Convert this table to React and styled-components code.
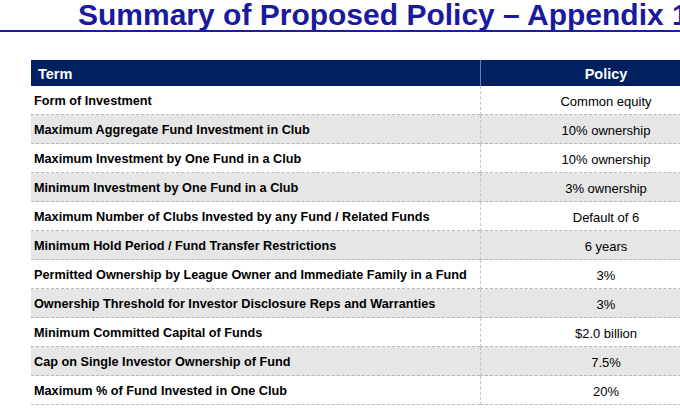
import React from "react";
import styled, { createGlobalStyle } from "styled-components";

const GlobalStyle = createGlobalStyle`
  html, body {
    margin: 0;
    padding: 0;
    background: #fff;
    overflow: hidden;
  }
  body {
    font-family: "Liberation Sans", Arial, sans-serif;
  }
`;

const Page = styled.div`
  width: 680px;
  height: 418px;
  overflow: hidden;
  background: #fff;
`;

const TitleBar = styled.div`
  height: 30px;
  border-bottom: 2px solid #1c1ca8;
  padding-left: 78px;
  white-space: nowrap;
  overflow: hidden;
`;

const Title = styled.h1`
  margin: 0;
  font-size: 30px;
  line-height: 29px;
  font-weight: bold;
  color: #1a1a9e;
`;

const TableWrap = styled.div`
  margin-top: 28px;
  margin-left: 31px;
  width: 700px;
`;

const Grid = styled.div`
  display: grid;
  grid-template-columns: 449px 251px;
`;

const HeadCell = styled.div`
  height: 26px;
  box-sizing: border-box;
  padding-top: 1px;
  background: #002060;
  color: #fff;
  font-weight: bold;
  font-size: 14.5px;
  display: flex;
  align-items: center;
  justify-content: ${(p) => (p.$center ? "center" : "flex-start")};
  padding-left: ${(p) => (p.$center ? "0" : "7px")};
  border-left: ${(p) => (p.$center ? "1px solid #6a7fa8" : "none")};
`;

const Cell = styled.div`
  height: 29px;
  box-sizing: border-box;
  padding-top: 2px;
  background: ${(p) => (p.$shade ? "#e6e6e6" : "#fff")};
  border-bottom: 1px dashed #b8b8b8;
  color: #000;
  font-size: ${(p) => (p.$center ? "13px" : "12.7px")};
  font-weight: ${(p) => (p.$center ? "normal" : "bold")};
  display: flex;
  align-items: center;
  justify-content: ${(p) => (p.$center ? "center" : "flex-start")};
  padding-left: ${(p) => (p.$center ? "0" : "3px")};
  border-left: ${(p) => (p.$center ? "1px dashed #c4c4c4" : "none")};
  white-space: nowrap;
`;

const rows = [
  ["Form of Investment", "Common equity"],
  ["Maximum Aggregate Fund Investment in Club", "10% ownership"],
  ["Maximum Investment by One Fund in a Club", "10% ownership"],
  ["Minimum Investment by One Fund in a Club", "3% ownership"],
  ["Maximum Number of Clubs Invested by any Fund / Related Funds", "Default of 6"],
  ["Minimum Hold Period / Fund Transfer Restrictions", "6 years"],
  ["Permitted Ownership by League Owner and Immediate Family in a Fund", "3%"],
  ["Ownership Threshold for Investor Disclosure Reps and Warranties", "3%"],
  ["Minimum Committed Capital of Funds", "$2.0 billion"],
  ["Cap on Single Investor Ownership of Fund", "7.5%"],
  ["Maximum % of Fund Invested in One Club", "20%"],
];

export default function App() {
  return (
    <Page>
      <GlobalStyle />
      <TitleBar>
        <Title>Summary of Proposed Policy – Appendix 1</Title>
      </TitleBar>
      <TableWrap>
        <Grid>
          <HeadCell>Term</HeadCell>
          <HeadCell $center>Policy</HeadCell>
          {rows.map(([term, policy], i) => (
            <React.Fragment key={term}>
              <Cell $shade={i % 2 === 1}>{term}</Cell>
              <Cell $shade={i % 2 === 1} $center>
                {policy}
              </Cell>
            </React.Fragment>
          ))}
        </Grid>
      </TableWrap>
    </Page>
  );
}
